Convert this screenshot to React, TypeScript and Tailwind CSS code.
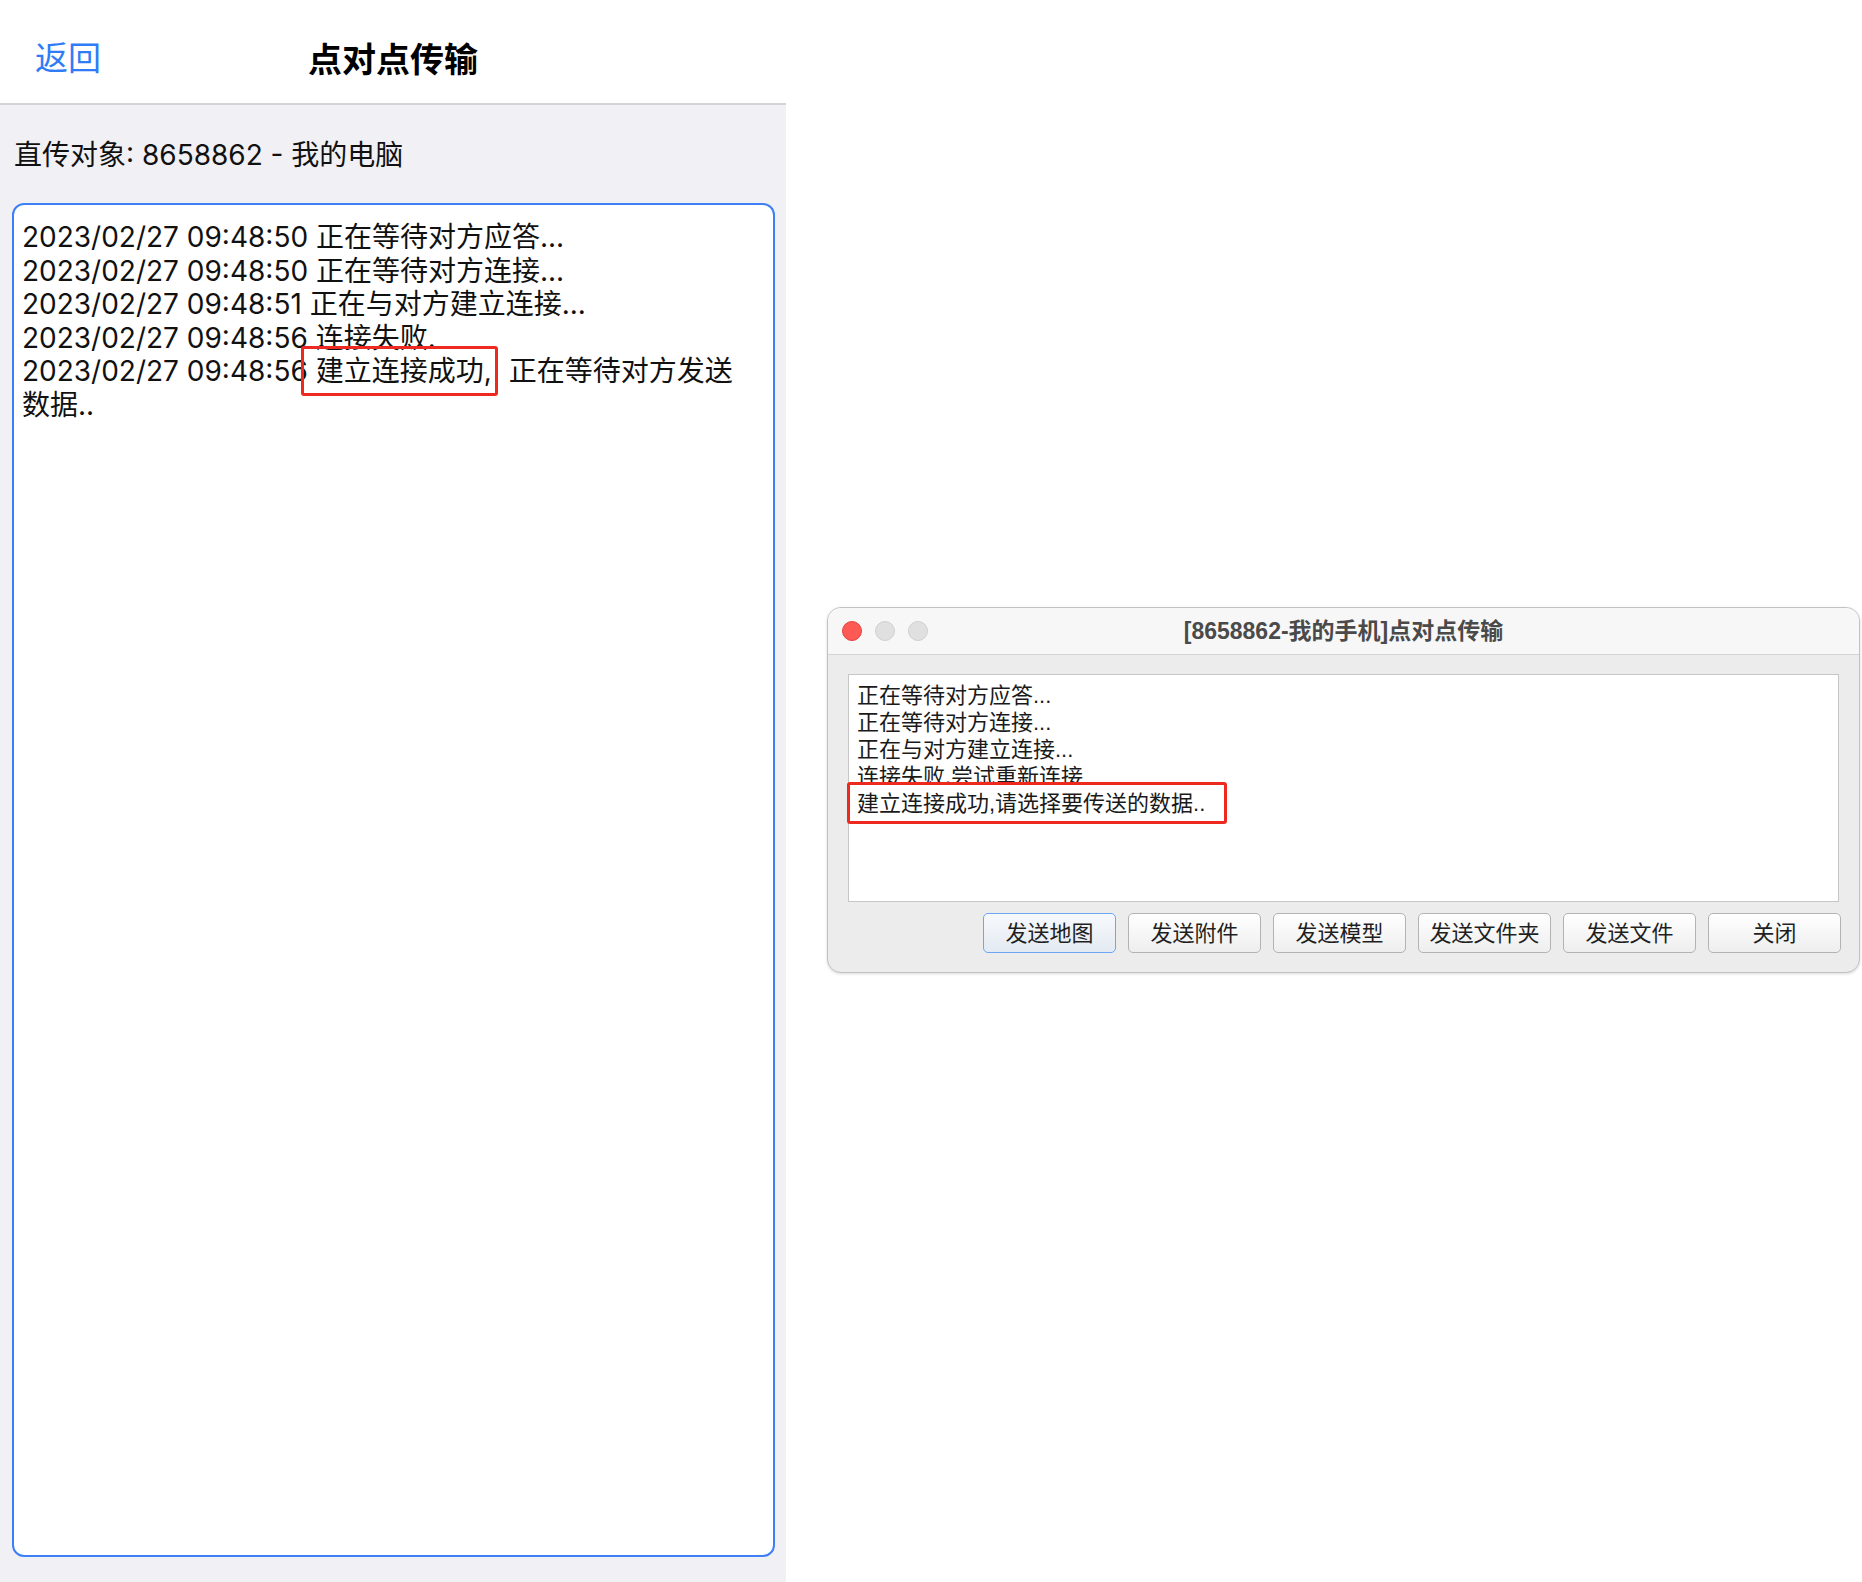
const FONT = '"Liberation Sans", "Noto Sans CJK SC", sans-serif';
const IOS_FONT = 'Inter, "Noto Sans CJK SC", sans-serif';

const phoneLogs = [
    '2023/02/27 09:48:50 正在等待对方应答...',
    '2023/02/27 09:48:50 正在等待对方连接...',
    '2023/02/27 09:48:51 正在与对方建立连接...',
    '2023/02/27 09:48:56 连接失败.',
];

const pcLogs = ['正在等待对方应答...', '正在等待对方连接...', '正在与对方建立连接...', '连接失败,尝试重新连接'];

const buttons = ['发送地图', '发送附件', '发送模型', '发送文件夹', '发送文件', '关闭'];

function PhonePanel() {
    return (
        <div className="w-[786px] h-[1582px] flex flex-col bg-[#f0f0f5] shrink-0" style={{ fontFamily: IOS_FONT }}>
            <div className="h-[105px] bg-white border-b-2 border-[#d4d4d8] grid grid-cols-[1fr_auto_1fr] items-center pt-[15px] px-[35px]">
                <span className="text-[33px] text-[#2f7cf6]">返回</span>
                <span className="text-[34px] font-bold text-black">点对点传输</span>
                <span />
            </div>

            <div className="px-[14px] pt-[33px] pb-[31px] text-[28px] leading-[34px] text-[#111]">
                直传对象: 8658862 - 我的电脑
            </div>

            <div className="mx-[12px] mr-[11px] h-[1354px] rounded-[12px] border-2 border-[#3d80f5] bg-white pt-[16px] pl-[8px] text-[28px] leading-[33.6px] text-[#111]">
                {phoneLogs.map((line) => (
                    <div key={line}>{line}</div>
                ))}
                <div>
                    2023/02/27 09:48:56{' '}
                    <span className="relative">
                        <span className="absolute -left-[15px] -right-[6px] -top-[8px] -bottom-[8px] rounded-[3px] border-[3px] border-[#ee2a20]" />
                        建立连接成功,
                    </span>
                    <span className="ml-[17px]">正在等待对方发送</span>
                    <br />
                    数据..
                </div>
            </div>
        </div>
    );
}

function Dot({ red }: { red?: boolean }) {
    return (
        <span
            className={
                red
                    ? 'w-[20px] h-[20px] rounded-full bg-[#fe5a55] border border-[#e3433e]'
                    : 'w-[20px] h-[20px] rounded-full bg-[#e0e0e0] border border-[#cfcfcf]'
            }
        />
    );
}

function DesktopWindow() {
    return (
        <div className="w-[1033px] h-[366px] rounded-[14px] border border-[#c2c2c2] bg-[#ececec] overflow-hidden flex flex-col shadow-[0_1px_3px_rgba(0,0,0,0.15)]">
            <div className="h-[47px] bg-[#f7f7f7] border-b border-[#d3d3d3] flex items-center relative shrink-0">
                <div className="flex items-center gap-[13px] pl-[14px]">
                    <Dot red />
                    <Dot />
                    <Dot />
                </div>
                <div className="absolute inset-0 flex items-center justify-center text-[23px] font-semibold text-[#4a4a4a]">
                    [8658862-我的手机]点对点传输
                </div>
            </div>

            <div className="px-[20px] pt-[19px]">
                <div className="h-[228px] bg-white border border-[#c6c6c6] pt-[7px] pl-[8px] text-[22px] leading-[27px] text-[#1a1a1a]">
                    {pcLogs.map((line) => (
                        <div key={line}>{line}</div>
                    ))}
                    <div className="relative">
                        <span className="absolute -left-[10px] w-[380px] -top-[8px] h-[42px] bg-white rounded-[3px] border-[3px] border-[#ee2a20]" />
                        <span className="relative">建立连接成功,请选择要传送的数据..</span>
                    </div>
                </div>

                <div className="flex justify-end gap-[12px] mt-[11px] -mr-[2px]">
                    {buttons.map((b, i) => (
                        <button
                            key={b}
                            className={
                                i === 0
                                    ? 'w-[133px] h-[40px] rounded-[5px] border-[1.5px] border-[#6ba6f4] bg-gradient-to-b from-[#f7f9fc] to-[#e4eaf2] text-[22px] text-[#1f1f1f]'
                                    : 'w-[133px] h-[40px] rounded-[5px] border border-[#b3b3b3] bg-gradient-to-b from-white to-[#eeeeee] text-[22px] text-[#1f1f1f]'
                            }
                        >
                            {b}
                        </button>
                    ))}
                </div>
            </div>
        </div>
    );
}

export default function App() {
    return (
        <div className="w-[1862px] h-[1582px] bg-white flex overflow-hidden" style={{ fontFamily: FONT }}>
            <PhonePanel />
            <div className="pt-[607px] pl-[41px]">
                <DesktopWindow />
            </div>
        </div>
    );
}
